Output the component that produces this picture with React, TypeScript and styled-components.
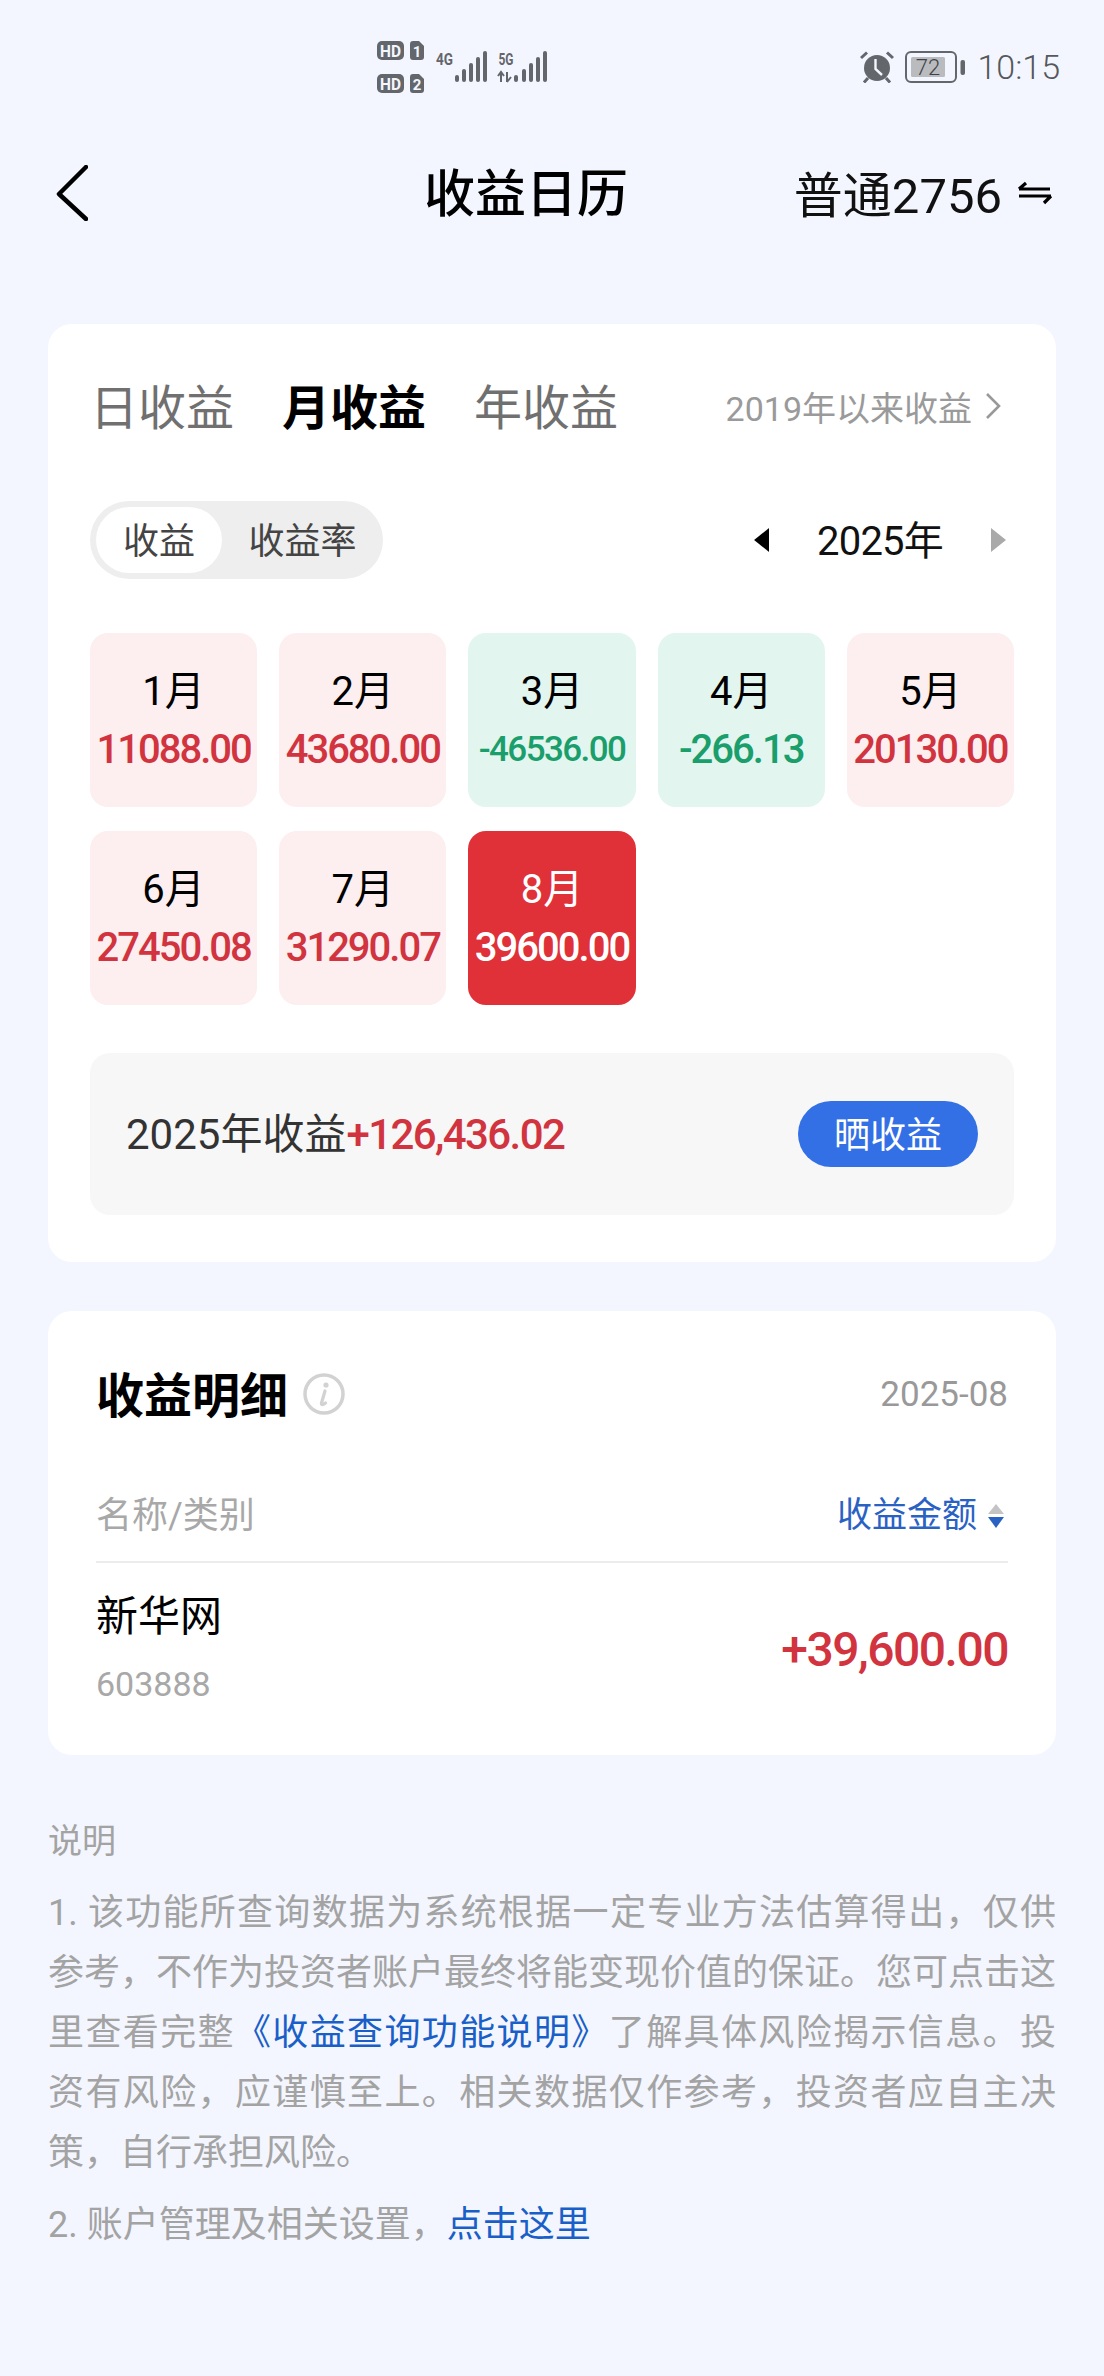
import React from "react";
import styled, { createGlobalStyle } from "styled-components";

const SANS = `Roboto, "Noto Sans CJK SC", sans-serif`;

const months = [
  { label: "1月", value: "11088.00", tone: "up" },
  { label: "2月", value: "43680.00", tone: "up" },
  { label: "3月", value: "-46536.00", tone: "down", small: true },
  { label: "4月", value: "-266.13", tone: "down" },
  { label: "5月", value: "20130.00", tone: "up" },
  { label: "6月", value: "27450.08", tone: "up" },
  { label: "7月", value: "31290.07", tone: "up" },
  { label: "8月", value: "39600.00", tone: "active" },
];

const cellBg: Record<string, string> = { up: "#fdeeef", down: "#e2f5ee", active: "#e03038" };
const cellColor: Record<string, string> = { up: "#d1343f", down: "#1a9e6c", active: "#ffffff" };

function App() {
  return (
    <Page>
      <GlobalStyle />
      <StatusBar>
        <NetworkIcons />
        <StatusRight>
          <AlarmIcon />
          <BatteryIcon />
          <StatusTime>10:15</StatusTime>
        </StatusRight>
      </StatusBar>

      <Header>
        <svg width="32" height="56" viewBox="0 0 32 56" fill="none">
          <polyline points="30,2 3,29 30,54" stroke="#000" strokeWidth="4.5" strokeLinecap="round" strokeLinejoin="round" />
        </svg>
        <Title>收益日历</Title>
        <Account>
          <AccountName>普通2756</AccountName>
          <svg width="36" height="24" viewBox="0 0 36 24" fill="none">
            <path d="M2 8H33M2 8L9 2" stroke="#000" strokeWidth="3.2" />
            <path d="M2 15H34M34 15L27 22" stroke="#000" strokeWidth="3.2" />
          </svg>
        </Account>
      </Header>

      <Card>
        <CalendarBody>
          <TabRow>
            <Tab>日收益</Tab>
            <Tab $active>月收益</Tab>
            <Tab>年收益</Tab>
            <SinceLink>
              2019年以来收益
              <svg width="18" height="28" viewBox="0 0 18 28" fill="none">
                <polyline points="3,2 15,14 3,26" stroke="#999" strokeWidth="2.6" />
              </svg>
            </SinceLink>
          </TabRow>

          <FilterRow>
            <Segmented>
              <Segment $active>收益</Segment>
              <Segment>收益率</Segment>
            </Segmented>
            <YearNav>
              <Arrow $dir="left" />
              <YearLabel>2025年</YearLabel>
              <Arrow $dir="right" $muted />
            </YearNav>
          </FilterRow>

          <MonthGrid>
            {months.map((m) => (
              <MonthCell key={m.label} $tone={m.tone}>
                <MonthLabel $tone={m.tone}>{m.label}</MonthLabel>
                <MonthValue $tone={m.tone} $small={m.small}>{m.value}</MonthValue>
              </MonthCell>
            ))}
          </MonthGrid>

          <SummaryPanel>
            <SummaryText>
              2025年收益<SummaryAmount>+126,436.02</SummaryAmount>
            </SummaryText>
            <ShareButton>晒收益</ShareButton>
          </SummaryPanel>
        </CalendarBody>
      </Card>

      <DetailCard>
        <DetailHead>
          <DetailTitle>收益明细</DetailTitle>
          <svg width="42" height="42" viewBox="0 0 42 42" fill="none">
            <circle cx="21" cy="21" r="19" stroke="#d2d2d2" strokeWidth="3.5" />
            <circle cx="23" cy="12" r="2.6" fill="#d2d2d2" />
            <path d="M22 18L18.5 30C18 32 19.5 32.5 22.5 30" stroke="#d2d2d2" strokeWidth="3.2" strokeLinecap="round" />
          </svg>
          <DetailDate>2025-08</DetailDate>
        </DetailHead>
        <TableHead>
          <ColumnName>名称/类别</ColumnName>
          <ColumnSort>
            收益金额
            <svg width="18" height="24" viewBox="0 0 18 24">
              <path d="M9 0L17 10H1Z" fill="#c4c4c4" />
              <path d="M1 13H17L9 24Z" fill="#2a62c4" />
            </svg>
          </ColumnSort>
        </TableHead>
        <StockRow>
          <StockInfo>
            <StockName>新华网</StockName>
            <StockCode>603888</StockCode>
          </StockInfo>
          <StockAmount>+39,600.00</StockAmount>
        </StockRow>
      </DetailCard>

      <Notes>
        <NoteHeading>说明</NoteHeading>
        <NoteText>
          1. 该功能所查询数据为系统根据一定专业方法估算得出，仅供参考，不作为投资者账户最终将能变现价值的保证。您可点击这里查看完整
          <NoteLink>《收益查询功能说明》</NoteLink>
          了解具体风险揭示信息。投资有风险，应谨慎至上。相关数据仅作参考，投资者应自主决策，自行承担风险。
        </NoteText>
        <NoteText>
          2. 账户管理及相关设置，<NoteLink>点击这里</NoteLink>
        </NoteText>
      </Notes>
    </Page>
  );
}

function NetworkIcons() {
  const grey = "#63666b";
  const bars = (xs: number[]) =>
    xs.map((x, i) => (
      <rect key={x} x={x} y={34 - i * 6} width="4" height={7 + i * 6} rx="2" fill={grey} />
    ));
  return (
    <svg width="170" height="52" viewBox="0 0 170 52">
      <g fontFamily="Roboto, sans-serif" fontWeight="700" fontSize="17" textAnchor="middle">
        <rect x="0" y="0" width="27" height="19" rx="5" fill={grey} />
        <text x="13.5" y="15.5" fill="#f3f6fe" textLength="21" lengthAdjust="spacingAndGlyphs">HD</text>
        <path d="M33 3a3 3 0 0 1 3-3h6l5 5v11a3 3 0 0 1-3 3h-8a3 3 0 0 1-3-3Z" fill={grey} />
        <text x="40" y="15.5" fill="#f3f6fe" fontSize="15">1</text>
        <rect x="0" y="33" width="27" height="19" rx="5" fill={grey} />
        <text x="13.5" y="48.5" fill="#f3f6fe" textLength="21" lengthAdjust="spacingAndGlyphs">HD</text>
        <path d="M33 36a3 3 0 0 1 3-3h6l5 5v11a3 3 0 0 1-3 3h-8a3 3 0 0 1-3-3Z" fill={grey} />
        <text x="40" y="48.5" fill="#f3f6fe" fontSize="15">2</text>
        <text x="67.5" y="24" fill={grey} textLength="17" lengthAdjust="spacingAndGlyphs">4G</text>
        <text x="129" y="24" fill={grey} textLength="15" lengthAdjust="spacingAndGlyphs">5G</text>
      </g>
      {bars([78, 85, 92, 99, 106])}
      {bars([138, 146, 153, 160, 167].map((x) => x - 1))}
      <path d="M124 31V41M121 35L124 31L127 35M130 31V41M130 41L134 36" stroke={grey} strokeWidth="2" fill="none" />
    </svg>
  );
}

function AlarmIcon() {
  return (
    <svg width="34" height="32" viewBox="0 0 34 32">
      <circle cx="17" cy="17" r="13" fill="#63666b" />
      <path d="M15.5 8V18L22 24" stroke="#f3f6fe" strokeWidth="2.4" fill="none" />
      <path d="M1 7L7 1.5M33 7L27 1.5" stroke="#63666b" strokeWidth="3" />
      <path d="M8 27L4 31.5M26 27L30 31.5" stroke="#63666b" strokeWidth="3" />
    </svg>
  );
}

function BatteryIcon() {
  return (
    <svg width="60" height="32" viewBox="0 0 60 32">
      <rect x="1" y="1" width="50" height="30" rx="5" fill="none" stroke="#63666b" strokeWidth="2" />
      <rect x="6" y="6" width="34" height="20" rx="1.5" fill="#b9bbbe" />
      <rect x="55.5" y="9" width="4.5" height="15" rx="2" fill="#63666b" />
      <text x="23" y="24" fontFamily="Roboto, sans-serif" fontSize="22" fontWeight="300" fill="#3f4246" textAnchor="middle">72</text>
    </svg>
  );
}

const GlobalStyle = createGlobalStyle`
  html, body {
    margin: 0;
    padding: 0;
    background: #f3f6fe;
    font-family: ${SANS};
  }
`;

const Page = styled.div`
  width: 1104px;
  height: 2376px;
  overflow: hidden;
  background: #f3f6fe;
  box-sizing: border-box;
`;

const StatusBar = styled.div`
  height: 134px;
  display: flex;
  align-items: center;
  justify-content: space-between;
  padding: 0 44px 0 377px;
`;

const StatusRight = styled.div`
  display: flex;
  align-items: center;
  gap: 11px;
`;

const StatusTime = styled.span`
  margin-left: 1px;
  font-size: 34px;
  font-weight: 300;
  color: #55585c;
`;

const Header = styled.div`
  height: 118px;
  display: flex;
  align-items: center;
  padding: 0 51px 0 56px;
`;

const Title = styled.div`
  margin-left: 336px;
  padding-bottom: 6px;
  font-size: 51px;
  font-weight: 500;
  color: #000;
`;

const Account = styled.div`
  margin-left: auto;
  display: flex;
  align-items: center;
  gap: 15px;
`;

const AccountName = styled.div`
  padding-bottom: 4px;
  font-size: 49px;
  color: #111;
`;

const Card = styled.div`
  margin: 72px 48px 0;
  background: #fff;
  border-radius: 24px;
`;

const CalendarBody = styled.div`
  padding: 50px 42px 47px;
`;

const TabRow = styled.div`
  height: 66px;
  display: flex;
  align-items: center;
  gap: 48px;
  padding: 0 12px 0 0;
`;

const Tab = styled.div<{ $active?: boolean }>`
  padding-bottom: 6px;
  font-size: 48px;
  font-weight: ${(p) => (p.$active ? 700 : 400)};
  color: ${(p) => (p.$active ? "#000" : "#707070")};
`;

const SinceLink = styled.div`
  margin-left: auto;
  display: flex;
  align-items: center;
  gap: 12px;
  padding-bottom: 2px;
  font-size: 34px;
  color: #9a9a9a;
`;

const FilterRow = styled.div`
  margin-top: 61px;
  display: flex;
  align-items: center;
  justify-content: space-between;
  padding-right: 8px;
`;

const Segmented = styled.div`
  width: 293px;
  height: 78px;
  box-sizing: border-box;
  padding: 6px;
  display: flex;
  background: #eeeeee;
  border-radius: 39px;
`;

const Segment = styled.div<{ $active?: boolean }>`
  flex: ${(p) => (p.$active ? "0 0 126px" : "1")};
  padding-bottom: 5px;
  padding-left: ${(p) => (p.$active ? "0" : "6px")};
  box-sizing: border-box;
  display: flex;
  align-items: center;
  justify-content: center;
  font-size: 36px;
  color: #444;
  border-radius: 33px;
  background: ${(p) => (p.$active ? "#fff" : "transparent")};
`;

const YearNav = styled.div`
  display: flex;
  align-items: center;
  gap: 48px;
`;

const YearLabel = styled.div`
  padding-bottom: 5px;
  font-size: 40px;
  letter-spacing: -0.8px;
  color: #111;
`;

const Arrow = styled.div<{ $dir: "left" | "right"; $muted?: boolean }>`
  width: 15px;
  height: 24px;
  background: ${(p) => (p.$muted ? "#aaaaaa" : "#000")};
  clip-path: ${(p) =>
    p.$dir === "left"
      ? "polygon(100% 0, 100% 100%, 0 50%)"
      : "polygon(0 0, 100% 50%, 0 100%)"};
`;

const MonthGrid = styled.div`
  margin-top: 54px;
  display: grid;
  grid-template-columns: repeat(5, 1fr);
  grid-auto-rows: 174px;
  column-gap: 22px;
  row-gap: 24px;
`;

const MonthCell = styled.div<{ $tone: string }>`
  padding-top: 33px;
  box-sizing: border-box;
  display: flex;
  flex-direction: column;
  align-items: center;
  border-radius: 18px;
  background: ${(p) => cellBg[p.$tone]};
`;

const MonthLabel = styled.div<{ $tone: string }>`
  height: 52px;
  line-height: 52px;
  font-size: 40px;
  color: ${(p) => (p.$tone === "active" ? "#fff" : "#000")};
`;

const MonthValue = styled.div<{ $tone: string; $small?: boolean }>`
  margin-top: 7px;
  height: 50px;
  line-height: 50px;
  white-space: nowrap;
  font-size: ${(p) => (p.$small ? "35px" : "40px")};
  font-weight: 500;
  letter-spacing: ${(p) => (p.$small ? "-1.6px" : "-2px")};
  color: ${(p) => cellColor[p.$tone]};
`;

const SummaryPanel = styled.div`
  margin-top: 48px;
  height: 162px;
  box-sizing: border-box;
  padding: 0 36px;
  display: flex;
  align-items: center;
  justify-content: space-between;
  background: #f7f7f7;
  border-radius: 20px;
`;

const SummaryText = styled.div`
  padding-bottom: 7px;
  font-size: 42px;
  color: #333;
`;

const SummaryAmount = styled.span`
  font-weight: 500;
  letter-spacing: -1.6px;
  color: #d1343f;
`;

const ShareButton = styled.div`
  width: 180px;
  height: 66px;
  padding-bottom: 5px;
  box-sizing: border-box;
  display: flex;
  align-items: center;
  justify-content: center;
  font-size: 36px;
  color: #fff;
  background: #3370e6;
  border-radius: 33px;
`;

const DetailCard = styled(Card)`
  margin-top: 49px;
  height: 444px;
  box-sizing: border-box;
  padding: 48px 48px 0;
`;

const DetailHead = styled.div`
  height: 70px;
  display: flex;
  align-items: center;
  gap: 15px;
`;

const DetailTitle = styled.div`
  padding-bottom: 5px;
  font-size: 48px;
  font-weight: 700;
  color: #000;
`;

const DetailDate = styled.div`
  margin-left: auto;
  font-size: 35px;
  color: #999;
`;

const TableHead = styled.div`
  height: 134px;
  padding-top: 61px;
  box-sizing: border-box;
  display: flex;
  justify-content: space-between;
  align-items: flex-start;
  border-bottom: 2px solid #ececec;
  font-size: 36px;
  line-height: 52px;
`;

const ColumnName = styled.div`
  color: #a8a8a8;
`;

const ColumnSort = styled.div`
  display: flex;
  align-items: center;
  gap: 10px;
  padding-right: 3px;
  font-size: 35px;
  color: #2a62c4;
`;

const StockRow = styled.div`
  display: flex;
  align-items: center;
  justify-content: space-between;
  padding-top: 26px;
`;

const StockInfo = styled.div`
  display: flex;
  flex-direction: column;
  gap: 14px;
`;

const StockName = styled.div`
  font-size: 42px;
  line-height: 56px;
  color: #000;
`;

const StockCode = styled.div`
  font-size: 34px;
  line-height: 50px;
  color: #a8a8a8;
`;

const StockAmount = styled.div`
  font-size: 48px;
  font-weight: 500;
  letter-spacing: -1.5px;
  color: #d1343f;
`;

const Notes = styled.div`
  margin: 56px 48px 0;
  font-size: 36px;
  line-height: 60px;
  color: #a3a3a3;
`;

const NoteHeading = styled.div`
  margin-bottom: 12px;
  font-size: 34px;
`;

const NoteText = styled.div`
  margin-bottom: 12px;
  text-align: justify;
`;

const NoteLink = styled.span`
  color: #1a5fc8;
`;

export default App;
